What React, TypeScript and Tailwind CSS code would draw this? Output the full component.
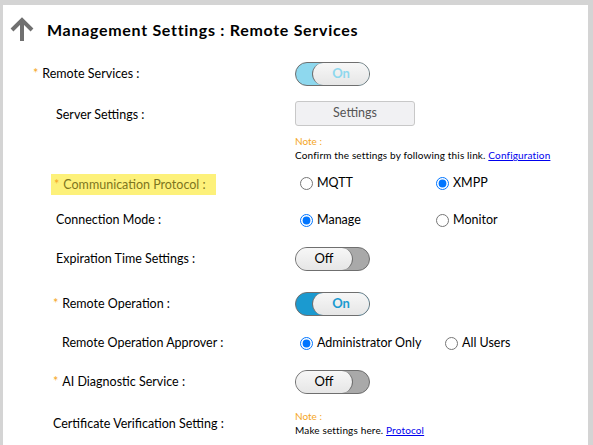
import { ReactNode } from 'react'

type ToggleProps = {
  on: boolean
  tone?: 'light' | 'strong'
}

function Toggle({ on, tone = 'strong' }: ToggleProps) {
  if (on) {
    const track = tone === 'light' ? 'bg-[#8ed8ee]' : 'bg-[#1b9ad0]'
    const text = tone === 'light' ? 'text-[#8ed8ee]' : 'text-[#1b9ad0]'
    return (
      <div className={`flex h-[24px] w-[75px] rounded-full border border-[#6f6f6f] ${track}`}>
        <div
          className={`ml-auto flex h-full w-[57px] items-center justify-center rounded-full border-l border-[#6f6f6f] bg-gradient-to-b from-[#f7f7f7] to-[#e6e6e6] text-[13px] font-bold ${text}`}
        >
          On
        </div>
      </div>
    )
  }
  return (
    <div className="flex h-[24px] w-[75px] rounded-full border border-[#6f6f6f] bg-[#a9a9a9]">
      <div className="flex h-full w-[57px] items-center justify-center rounded-full border-r border-[#6f6f6f] bg-gradient-to-b from-[#f7f7f7] to-[#e6e6e6] text-[13px] text-black">
        Off
      </div>
    </div>
  )
}

function Radio({ checked, label, width }: { checked: boolean; label: string; width: string }) {
  return (
    <label className={`flex items-center gap-[4px] ${width}`}>
      <input type="radio" checked={checked} readOnly className="m-0 h-[13px] w-[13px]" />
      <span className="text-[12.5px] text-black">{label}</span>
    </label>
  )
}

function Row({ label, pad, star, height, children }: { label: string; pad: string; star?: boolean; height: string; children: ReactNode }) {
  return (
    <div className={`flex items-center ${height}`}>
      <div className={`w-[292px] shrink-0 ${pad} text-[12.5px] text-black`}>
        {star && <span className="mr-[4px] text-[#f5a623]">*</span>}
        {label}
      </div>
      <div>{children}</div>
    </div>
  )
}

export default function App() {
  return (
    <div className="h-[445px] w-[593px] overflow-hidden bg-[#d4d4d4] pl-[3px] pr-[5px] pt-[5px] font-['Lato',sans-serif]">
      <div className="h-full bg-white">
        <div className="flex items-center pt-[12px]">
          <svg width="26" height="26" viewBox="0 0 26 26" className="ml-[6px]">
            <path d="M13 24 V4 M3 13 L13 3 L23 13" stroke="#707070" strokeWidth="4" fill="none" strokeLinecap="butt" strokeLinejoin="miter" />
          </svg>
          <h1 className="ml-[12px] text-[16px] font-bold tracking-[0.7px] text-black">Management Settings : Remote Services</h1>
        </div>

        <div className="mt-[19px]">
          <Row label="Remote Services :" pad="pl-[30px]" star height="h-[24px]">
            <Toggle on tone="light" />
          </Row>

          <div className="mt-[15px] flex">
            <div className="w-[292px] shrink-0 pl-[53px] pt-[5px] text-[12.5px] text-black">Server Settings :</div>
            <div>
              <div className="flex h-[25px] w-[120px] items-center justify-center rounded-[3px] border border-[#c8c8c8] bg-[#f1f1f3] text-[12.5px] text-[#555]">
                Settings
              </div>
              <div className="mt-[9px] text-[10px] leading-[13px] text-[#f5a623]">Note :</div>
              <div className="text-[10px] leading-[15px] tracking-[0.15px] text-black">
                Confirm the settings by following this link.{' '}
                <a className="text-[#0000ee] underline">Configuration</a>
              </div>
            </div>
          </div>

          <div className="mt-[9px] flex h-[22px] items-center">
            <div className="w-[292px] shrink-0 pl-[48px]">
              <span className="inline-flex h-[21px] items-center bg-[#fdf17a] pl-[3px] pr-[10px] text-[12.5px] text-[#7d7520]">
                <span className="mr-[4px] text-[#f5a623]">*</span>
                Communication Protocol :
              </span>
            </div>
            <div className="flex pl-[5px]">
              <Radio checked={false} label="MQTT" width="w-[136px]" />
              <Radio checked label="XMPP" width="w-[90px]" />
            </div>
          </div>

          <div className="mt-[15px]">
            <Row label="Connection Mode :" pad="pl-[53px]" height="h-[22px]">
              <div className="flex pl-[5px]">
                <Radio checked label="Manage" width="w-[136px]" />
                <Radio checked={false} label="Monitor" width="w-[90px]" />
              </div>
            </Row>
          </div>

          <div className="mt-[16px]">
            <Row label="Expiration Time Settings :" pad="pl-[53px]" height="h-[24px]">
              <Toggle on={false} />
            </Row>
          </div>

          <div className="mt-[21px]">
            <Row label="Remote Operation :" pad="pl-[50px]" star height="h-[24px]">
              <Toggle on />
            </Row>
          </div>

          <div className="mt-[16px]">
            <Row label="Remote Operation Approver :" pad="pl-[59px]" height="h-[22px]">
              <div className="flex pl-[5px]">
                <Radio checked label="Administrator Only" width="w-[145px]" />
                <Radio checked={false} label="All Users" width="w-[90px]" />
              </div>
            </Row>
          </div>

          <div className="mt-[16px]">
            <Row label="AI Diagnostic Service :" pad="pl-[50px]" star height="h-[24px]">
              <Toggle on={false} />
            </Row>
          </div>

          <div className="mt-[16px] flex items-center">
            <div className="w-[292px] shrink-0 pl-[50px] text-[12.5px] text-black">Certificate Verification Setting :</div>
            <div>
              <div className="text-[10px] leading-[13px] text-[#f5a623]">Note :</div>
              <div className="text-[10px] leading-[15px] tracking-[0.15px] text-black">
                Make settings here. <a className="text-[#0000ee] underline">Protocol</a>
              </div>
            </div>
          </div>
        </div>
      </div>
    </div>
  )
}
